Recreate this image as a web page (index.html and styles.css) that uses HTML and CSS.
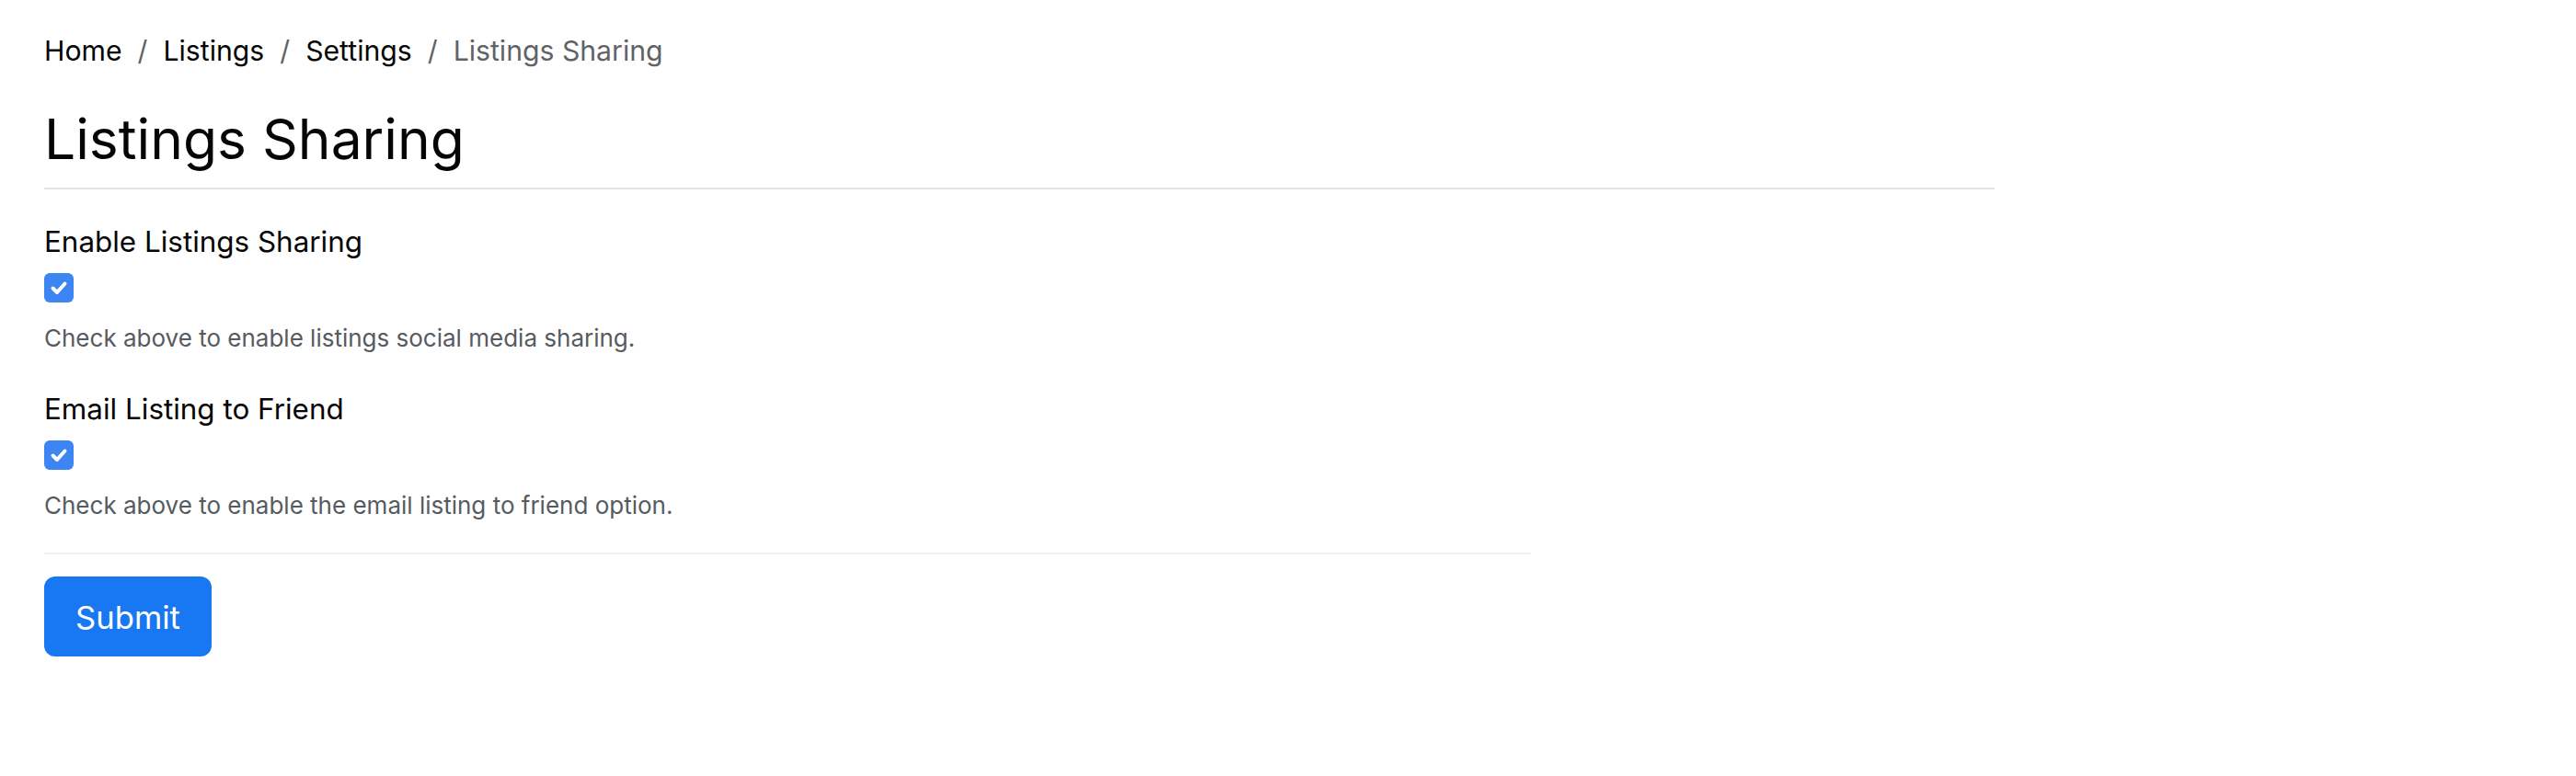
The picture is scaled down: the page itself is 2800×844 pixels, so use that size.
FILE: index.html
```html
<!DOCTYPE html>
<html lang="en">
<head>
<meta charset="utf-8">
<title>Listings Sharing</title>
<link rel="stylesheet" href="styles.css">
</head>
<body>
<main class="page">
  <nav class="breadcrumb">
    <a class="crumb" href="#">Home</a><span class="sep">/</span>
    <a class="crumb" href="#">Listings</a><span class="sep">/</span>
    <a class="crumb" href="#">Settings</a><span class="sep">/</span>
    <span class="crumb active">Listings Sharing</span>
  </nav>
  <h1 class="title">Listings Sharing</h1>
  <form class="form">
    <div class="group">
      <div class="label">Enable Listings Sharing</div>
      <span class="checkbox"><svg viewBox="0 0 32 32" width="32" height="32"><path d="M9.5 16.5 L14 21 L22.5 11.5" fill="none" stroke="#fff" stroke-width="4" stroke-linecap="round" stroke-linejoin="round"/></svg></span>
      <div class="help">Check above to enable listings social media sharing.</div>
    </div>
    <div class="group">
      <div class="label">Email Listing to Friend</div>
      <span class="checkbox"><svg viewBox="0 0 32 32" width="32" height="32"><path d="M9.5 16.5 L14 21 L22.5 11.5" fill="none" stroke="#fff" stroke-width="4" stroke-linecap="round" stroke-linejoin="round"/></svg></span>
      <div class="help">Check above to enable the email listing to friend option.</div>
    </div>
    <div class="actions">
      <button type="button" class="btn">Submit</button>
    </div>
  </form>
</main>
</body>
</html>
```

FILE: styles.css
```css
* { box-sizing: border-box; }
html, body { margin: 0; padding: 0; background: #fff; }
body {
  font-family: Inter, Lato, sans-serif;
  color: #050505;
}
.page {
  width: 2120px;
  margin-left: 48px;
  padding-top: 34px;
}
.breadcrumb {
  display: flex;
  align-items: center;
  font-size: 30.2px;
  line-height: 43px;
}
.crumb { color: #050505; text-decoration: none; }
.crumb.active { color: #5f6368; }
.sep { color: #5f6368; padding: 0 17px; }
.title {
  margin: 40px 0 0;
  font-size: 60.5px;
  font-weight: 400;
  line-height: 69px;
  padding-bottom: 18px;
  border-bottom: 2px solid #e4e4e4;
}
.form {
  width: 1616px;
  padding-top: 33px;
}
.group {
  display: flex;
  flex-direction: column;
  align-items: flex-start;
  margin-bottom: 34px;
}
.label {
  font-size: 31.4px;
  line-height: 48px;
}
.checkbox {
  display: block;
  width: 32px;
  height: 32px;
  border-radius: 6px;
  background: #3d85f3;
  margin-top: 10px;
}
.checkbox svg { display: block; }
.help {
  margin-top: 20px;
  font-size: 26px;
  line-height: 38px;
  color: #565b61;
}
.actions {
  border-top: 2px solid #f1f1f1;
  margin-top: -2px;
  padding-top: 24px;
}
.btn {
  font-family: inherit;
  font-size: 34.6px;
  line-height: 48px;
  color: #fff;
  background: #1877f2;
  border: 0;
  border-radius: 12px;
  padding: 19.5px 0;
  width: 182px;
}
```
